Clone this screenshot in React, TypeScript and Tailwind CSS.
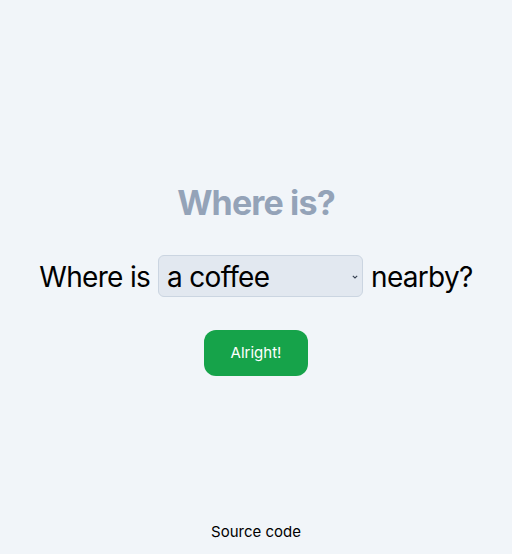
import React, { useState } from 'react';

const PLACES = ['a coffee', 'a pharmacy', 'a bakery', 'a bus stop'];

const App: React.FC = () => {
  const [place, setPlace] = useState(PLACES[0]);

  return (
    <div className="min-h-screen bg-[#f1f5f9] flex flex-col items-center text-black font-['Inter',sans-serif]">
      <main className="flex flex-col items-center pt-[183px]">
        <h1 className="text-[34px] leading-[40px] font-bold text-[#94a3b8] tracking-tight">Where is?</h1>

        <div className="mt-8 flex items-center gap-2 text-[28px] tracking-tight">
          <span>Where is</span>
          <div className="relative">
            <select
              value={place}
              onChange={(e) => setPlace(e.target.value)}
              className="appearance-none w-[205px] h-[42px] pl-2 pr-6 bg-[#e2e8f0] border border-[#cbd5e1] rounded-md text-[28px] tracking-tight outline-none"
            >
              {PLACES.map((p) => (
                <option key={p} value={p}>
                  {p}
                </option>
              ))}
            </select>
            {/* Chevron */}
            <svg
              className="absolute right-[4px] top-1/2 -translate-y-1/2 w-[8px] h-[6px] pointer-events-none"
              viewBox="0 0 8 6"
              fill="none"
              stroke="#374151"
              strokeWidth="1.1"
            >
              <path d="M1.8 1.8 L4 4 L6.2 1.8" />
            </svg>
          </div>
          <span>nearby?</span>
        </div>

        <button className="mt-[32px] h-[46px] w-[104px] bg-[#16a34a] text-white text-[15px] rounded-xl">
          Alright!
        </button>
      </main>

      <footer className="mt-auto pb-[11px]">
        <a className="text-[15px]">Source code</a>
      </footer>
    </div>
  );
};

export default App;
